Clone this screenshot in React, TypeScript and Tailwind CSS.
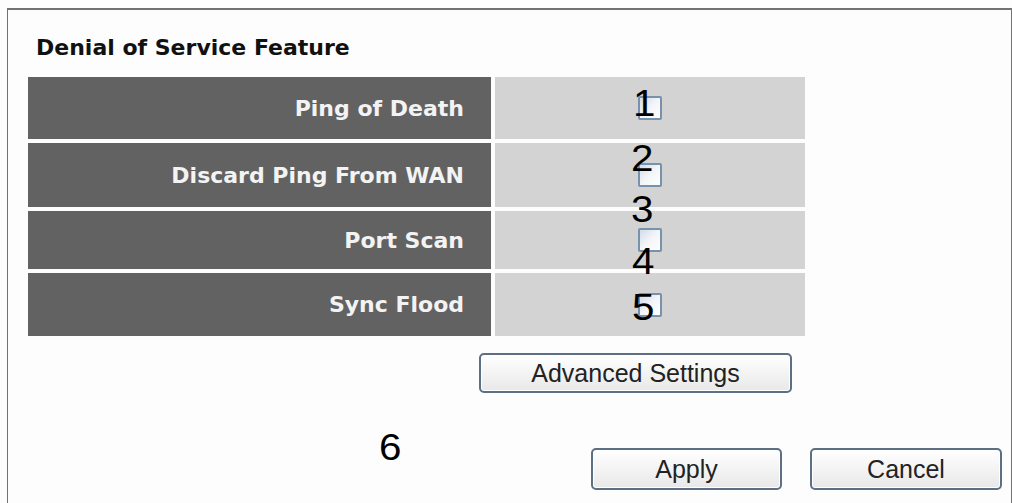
import React from "react";

type Feature = { label: string; height: string };

const features: Feature[] = [
  { label: "Ping of Death", height: "h-[62px]" },
  { label: "Discard Ping From WAN", height: "h-[64px]" },
  { label: "Port Scan", height: "h-[58px]" },
  { label: "Sync Flood", height: "h-[63px]" },
];

// numbered callouts that sit on top of the form
const callouts = [
  { n: "1", left: 633, top: 86 },
  { n: "2", left: 631, top: 141 },
  { n: "3", left: 631, top: 192 },
  { n: "4", left: 632, top: 244 },
  { n: "5", left: 632, top: 290 },
  { n: "6", left: 379, top: 430 },
];

function CheckBox() {
  return (
    <span className="block w-[24px] h-[24px] rounded-[2px] border-2 border-[#7891ad] bg-linear-to-br from-[#d3dce8] via-[#f3f5f8] to-white" />
  );
}

function FormButton({ label, width, height }: { label: string; width: string; height: string }) {
  return (
    <button
      type="button"
      className={`${width} ${height} flex items-center justify-center rounded-[5px] border-2 border-[#5c6f84] bg-linear-to-b from-white to-[#e8e8e8] shadow-[inset_0_0_0_1px_#ffffff] text-[25px] leading-none text-[#222] font-['Liberation_Sans',Arial,sans-serif]`}
    >
      {label}
    </button>
  );
}

export default function App() {
  return (
    <div className="relative w-[1012px] h-[503px] overflow-hidden bg-[#fdfdfd]">
      <div className="ml-[7px] mt-[8px] w-[1005px] h-[495px] border-t-2 border-x border-[#727272] pt-[25px] pl-[20px]">
        <h2 className="pl-[8px] h-[26px] text-[22px] leading-[26px] font-bold text-[#111] font-['DejaVu_Sans',Verdana,sans-serif]">
          Denial of Service Feature
        </h2>

        <div className="mt-[16px] grid grid-cols-[463px_310px] gap-[4px]">
          {features.map((f) => (
            <React.Fragment key={f.label}>
              <div
                className={`${f.height} flex items-center justify-end pr-[27px] bg-[#626262] text-[22px] font-bold text-[#f3f3f3] font-['DejaVu_Sans',Verdana,sans-serif]`}
              >
                {f.label}
              </div>
              <div className={`${f.height} flex items-center justify-center bg-[#d3d3d3]`}>
                <CheckBox />
              </div>
            </React.Fragment>
          ))}
        </div>

        <div className="mt-[17px] pl-[451px]">
          <FormButton label="Advanced Settings" width="w-[313px]" height="h-[40px]" />
        </div>

        <div className="mt-[55px] pl-[563px] flex gap-[28px]">
          <FormButton label="Apply" width="w-[191px]" height="h-[42px]" />
          <FormButton label="Cancel" width="w-[192px]" height="h-[42px]" />
        </div>
      </div>

      {callouts.map((c) => (
        <span
          key={c.n}
          className="absolute text-[36px] leading-none text-black origin-left scale-x-[1.12] font-['Liberation_Sans',Arial,sans-serif]"
          style={{ left: c.left, top: c.top }}
        >
          {c.n}
        </span>
      ))}
    </div>
  );
}
